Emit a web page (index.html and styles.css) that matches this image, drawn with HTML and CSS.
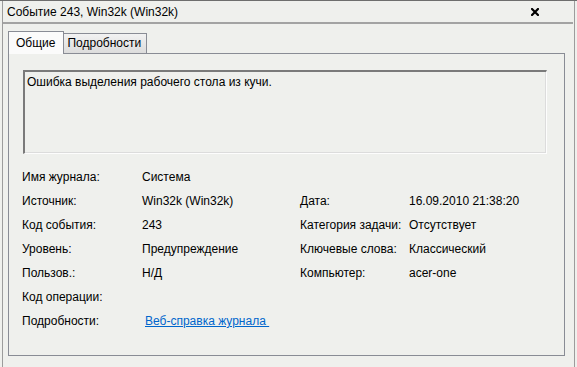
FILE: index.html
```html
<!DOCTYPE html>
<html lang="ru">

<head>
    <meta charset="UTF-8">
    <title>Событие 243, Win32k (Win32k)</title>
    <link rel="stylesheet" href="styles.css">
</head>

<body>
    <div class="window">
        <div class="frame">
            <div class="titlebar">
                <span class="title">Событие 243, Win32k (Win32k)</span>
                <svg class="close" width="8" height="8" viewBox="0 0 8 8">
                    <path d="M1 1 L7 7 M7 1 L1 7" stroke="#000" stroke-width="2.2" stroke-linecap="square" />
                </svg>
            </div>

            <div class="content">
                <div class="tabs">
                    <div class="tab active">Общие</div>
                    <div class="tab">Подробности</div>
                </div>

                <div class="panel">
                    <div class="description">Ошибка выделения рабочего стола из кучи.</div>

                    <div class="props">
                        <div class="label">Имя журнала:</div>
                        <div class="value">Система</div>
                        <div class="label"></div>
                        <div class="value"></div>

                        <div class="label">Источник:</div>
                        <div class="value">Win32k (Win32k)</div>
                        <div class="label">Дата:</div>
                        <div class="value">16.09.2010 21:38:20</div>

                        <div class="label">Код события:</div>
                        <div class="value">243</div>
                        <div class="label">Категория задачи:</div>
                        <div class="value">Отсутствует</div>

                        <div class="label">Уровень:</div>
                        <div class="value">Предупреждение</div>
                        <div class="label">Ключевые слова:</div>
                        <div class="value">Классический</div>

                        <div class="label">Пользов.:</div>
                        <div class="value">Н/Д</div>
                        <div class="label">Компьютер:</div>
                        <div class="value">acer-one</div>

                        <div class="label">Код операции:</div>
                        <div class="value"></div>
                        <div class="label"></div>
                        <div class="value"></div>

                        <div class="label">Подробности:</div>
                        <div class="value"><a class="help" href="#">Веб-справка журнала&nbsp;</a></div>
                    </div>
                </div>
            </div>
        </div>
    </div>
</body>

</html>
```

FILE: styles.css
```css
body {
    margin: 0;
    background-color: #eff0ed;
    color: #000;
    font-family: "Liberation Sans", Arial, sans-serif;
    font-size: 12px;
}

.window {
    width: 577px;
    height: 367px;
    box-sizing: border-box;
    border-top: 1px solid #6e6e6e;
    padding: 0 2px 0 2px;
}

.frame {
    height: 100%;
    border-left: 1px solid #9c9c9c;
    border-right: 1px solid #9c9c9c;
    box-sizing: border-box;
}

.titlebar {
    display: flex;
    align-items: center;
    justify-content: space-between;
    height: 21px;
    padding: 0 34px 0 4px;
    border-bottom: 2px solid #a3a3a3;
    margin-right: 1px;
}

.title {
    font-size: 12px;
    padding-top: 1px;
}

.close {
    display: block;
    margin-top: 1px;
}

.content {
    padding: 7px 9px 0 5px;
}

.tabs {
    display: flex;
    align-items: flex-end;
    height: 22px;
}

.tab {
    height: 19px;
    line-height: 19px;
    padding: 0 5px 0 3px;
    border: 1px solid #898c95;
    border-bottom: none;
    background: linear-gradient(#f2f2f2, #dcdcdc);
    margin-left: -1px;
}

.tab.active {
    position: relative;
    z-index: 1;
    height: 22px;
    line-height: 22px;
    padding: 0 8px 0 7px;
    margin-left: 0;
    background: #fbfbfb;
    margin-bottom: -1px;
    border-color: #898c95;
}

.panel {
    height: 303px;
    box-sizing: border-box;
    border: 1px solid #898c95;
    padding: 16px 17px 0 14px;
}

.description {
    height: 84px;
    box-sizing: border-box;
    border-top: 2px solid #7a7a7a;
    border-left: 2px solid #7a7a7a;
    border-right: 1px solid #fdfdfd;
    border-bottom: 1px solid #fdfdfd;
    box-shadow: inset -1px -1px 0 #dcdcdc;
    padding: 3px 2px;
    line-height: 15px;
}

.props {
    display: grid;
    grid-template-columns: 120px 158px 109px auto;
    grid-auto-rows: 24px;
    align-items: center;
    margin-top: 11px;
    margin-left: -1px;
}

.help {
    color: #0066cc;
    padding-left: 3px;
}
```
